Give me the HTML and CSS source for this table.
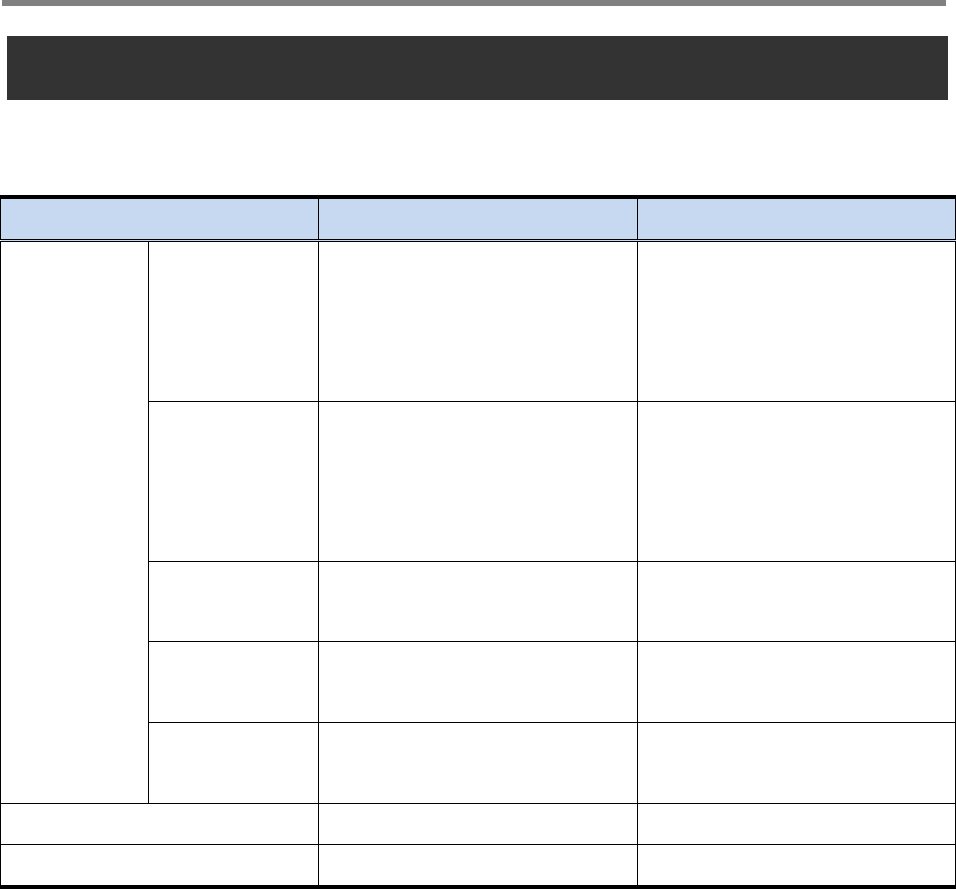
FILE: index.html
```html
<!DOCTYPE html>
<html lang="en">
<head>
    <meta charset="UTF-8">
    <meta name="viewport" content="width=device-width, initial-scale=1.0">
    <title>Sheet</title>
    <link rel="stylesheet" href="styles.css">
</head>
<body>
    <div class="top-rule"></div>
    <div class="banner"></div>

    <table class="grid-table">
        <colgroup>
            <col class="col-a">
            <col class="col-b">
            <col class="col-c">
            <col class="col-d">
        </colgroup>
        <thead>
            <tr class="row-head">
                <th colspan="2"></th>
                <th></th>
                <th></th>
            </tr>
        </thead>
        <tbody>
            <tr class="row-tall row-first">
                <td rowspan="5"></td>
                <td></td>
                <td></td>
                <td></td>
            </tr>
            <tr class="row-tall">
                <td></td>
                <td></td>
                <td></td>
            </tr>
            <tr class="row-mid">
                <td></td>
                <td></td>
                <td></td>
            </tr>
            <tr class="row-mid row-wide">
                <td></td>
                <td></td>
                <td></td>
            </tr>
            <tr class="row-mid row-wide">
                <td></td>
                <td></td>
                <td></td>
            </tr>
            <tr class="row-short">
                <td colspan="2"></td>
                <td></td>
                <td></td>
            </tr>
            <tr class="row-short row-last">
                <td colspan="2"></td>
                <td></td>
                <td></td>
            </tr>
        </tbody>
    </table>
</body>
</html>
```

FILE: styles.css
```css
body {
    font-family: 'Liberation Sans', Arial, sans-serif;
    background-color: #ffffff;
    color: #000000;
    margin: 0;
}

.top-rule {
    height: 6px;
    margin: 0 10px 0 2px;
    background-color: #808080;
}

.banner {
    height: 64px;
    margin: 30px 8px 0 7px;
    background-color: #333333;
}

.grid-table {
    width: 955px;
    margin-top: 95px;
    border-collapse: collapse;
    table-layout: fixed;
    border-top: 4px solid #000000;
    border-bottom: 4px solid #000000;
}

.col-a { width: 148px; }
.col-b { width: 170px; }
.col-c { width: 319px; }
.col-d { width: 318px; }

.grid-table th,
.grid-table td {
    padding: 0;
    border: 1px solid #000000;
}

.grid-table th {
    background-color: #c6d9f1;
}

.row-head th {
    height: 40px;
    border-top: 4px solid #000000;
    border-bottom: 3px double #000000;
}

.row-tall { height: 160px; }
.row-first { height: 161px; }
.row-mid { height: 80px; }
.row-wide { height: 81px; }
.row-short { height: 41px; }
.row-last { height: 42px; }

.row-last td {
    border-bottom: 4px solid #000000;
}
```
